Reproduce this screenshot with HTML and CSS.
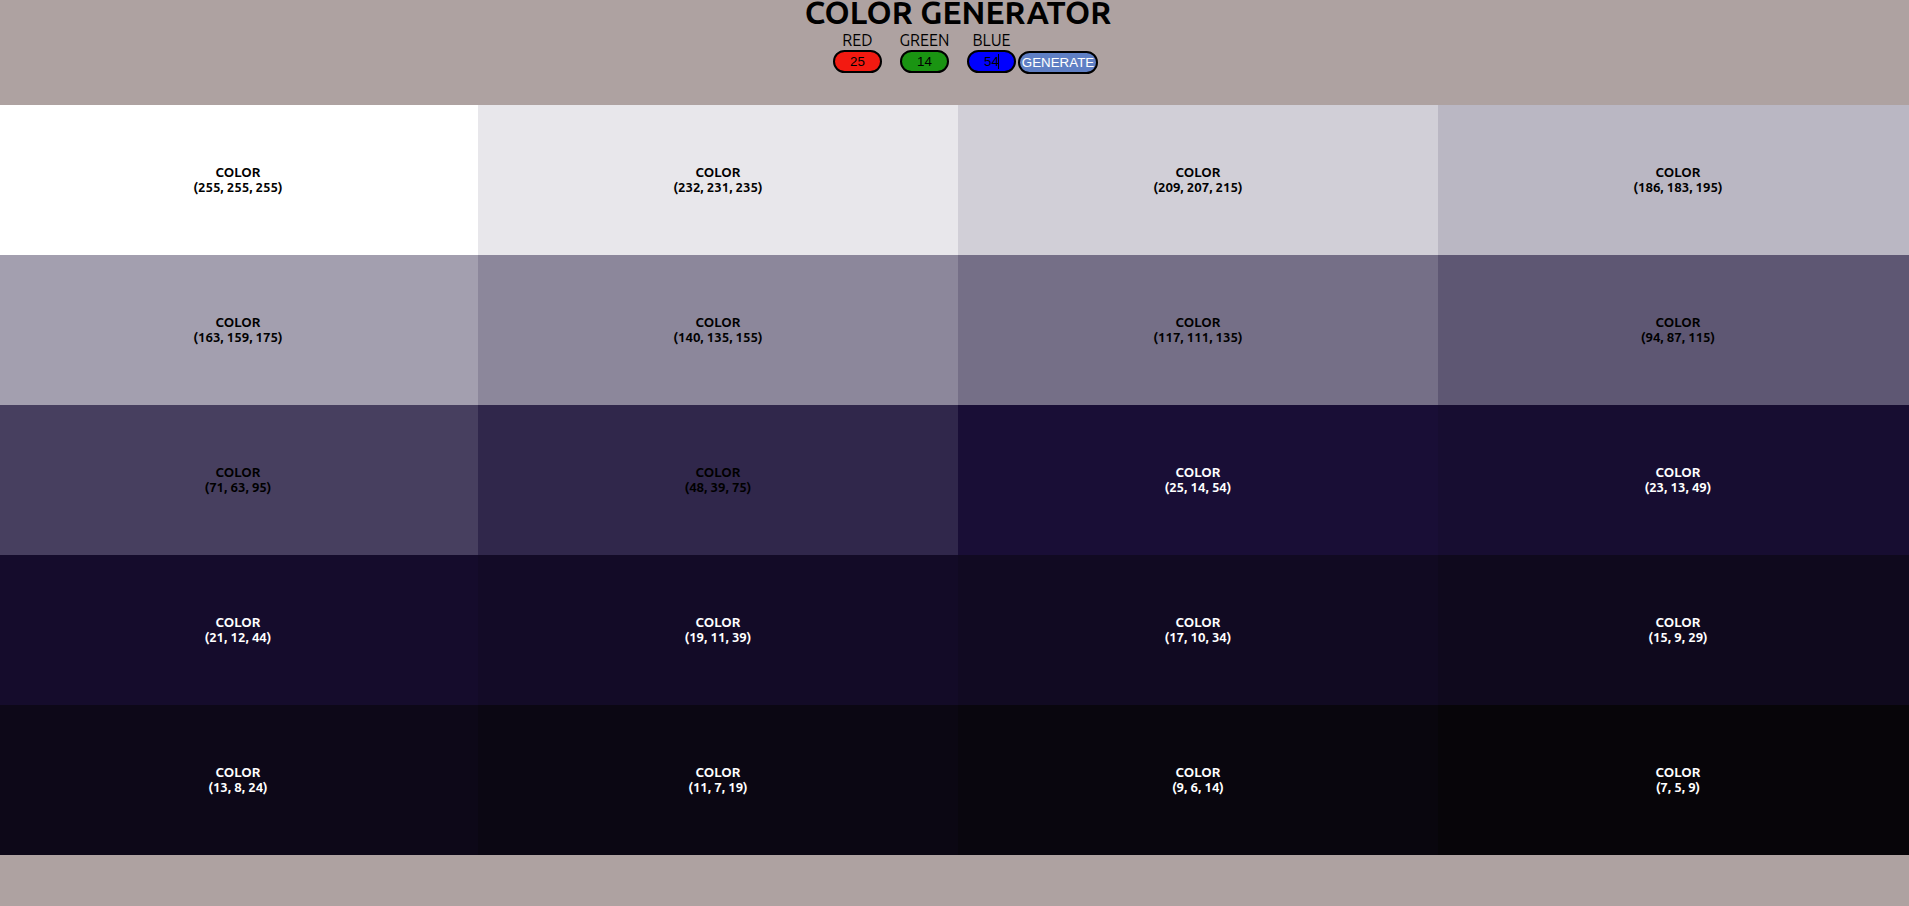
FILE: index.html
```html
<!DOCTYPE html>
<html lang="en">
<head>
<meta charset="utf-8">
<title>Color Generator</title>
<link rel="stylesheet" href="styles.css">
</head>
<body>
<main class="page">
  <header class="header">
    <h1 class="title">COLOR GENERATOR</h1>
    <form class="controls">
      <div class="field"><label for="red">RED</label><input class="channel red" id="red" type="text" inputmode="numeric" value="25"></div>
      <div class="field"><label for="green">GREEN</label><input class="channel green" id="green" type="text" inputmode="numeric" value="14"></div>
      <div class="field"><label for="blue">BLUE</label><input class="channel blue" id="blue" type="text" inputmode="numeric" value="54"><span class="caret"></span></div>
      <button class="generate" type="button">GENERATE</button>
    </form>
  </header>
  <section class="palette" id="palette"></section>
</main>
<script src="script.js"></script>
</body>
</html>
```
FILE: styles.css
```css
* {
  box-sizing: border-box;
  margin: 0;
  padding: 0;
}

body {
  background: #aea2a1;
  color: #000;
  font-family: Ubuntu, "Noto Sans", sans-serif;
  font-size: 16px;
  overflow: hidden;
}

.page {
  margin: 0 -9px 0 -2px;
}

.header {
  display: flex;
  flex-direction: column;
  align-items: center;
  padding-bottom: 31px;
}

.title {
  font-size: 32px;
  line-height: 24px;
  padding-bottom: 8px;
}

.controls {
  display: flex;
  align-items: flex-end;
  padding-left: 15px;
}

.field {
  position: relative;
  display: flex;
  flex-direction: column;
  align-items: center;
  gap: 2px;
  width: 49px;
  margin-right: 18px;
  padding-bottom: 1px;
  line-height: 16px;
}

.field:nth-child(3) {
  margin-right: 2px;
}

.channel {
  width: 49px;
  height: 23px;
  border: 2px solid #000;
  border-radius: 12px;
  color: #000;
  font-family: "Liberation Sans", Arial, sans-serif;
  text-align: center;
  outline: none;
}

.red {
  background: #f31a11;
}

.green {
  background: #1a9412;
}

.blue {
  background: #0000ff;
}

.caret {
  position: absolute;
  left: 31px;
  bottom: 5px;
  width: 1px;
  height: 15px;
  background: #000;
}

.generate {
  width: 80px;
  height: 23px;
  border: 2px solid #000;
  border-radius: 12px;
  background: #5f7fc4;
  color: #fff;
  font-family: "Liberation Sans", Arial, sans-serif;
  white-space: nowrap;
}

.palette {
  display: grid;
  grid-template-columns: repeat(4, 1fr);
  grid-auto-rows: 150px;
}

.swatch {
  display: flex;
  flex-direction: column;
  align-items: center;
  justify-content: center;
  padding-bottom: 1px;
  line-height: 15px;
}

.light-text {
  color: #fff;
}
```
FILE: script.js
```js
const colors = [
  [255, 255, 255], [232, 231, 235], [209, 207, 215], [186, 183, 195],
  [163, 159, 175], [140, 135, 155], [117, 111, 135], [94, 87, 115],
  [71, 63, 95], [48, 39, 75], [25, 14, 54], [23, 13, 49],
  [21, 12, 44], [19, 11, 39], [17, 10, 34], [15, 9, 29],
  [13, 8, 24], [11, 7, 19], [9, 6, 14], [7, 5, 9]
];
const palette = document.getElementById("palette");
colors.forEach((rgb, i) => {
  const value = `(${rgb.join(", ")})`;
  const swatch = document.createElement("div");
  swatch.className = i < 10 ? "swatch" : "swatch light-text";
  swatch.style.backgroundColor = "rgb" + value;
  for (const text of ["COLOR", value]) {
    const line = document.createElement("h5");
    line.textContent = text;
    swatch.append(line);
  }
  palette.append(swatch);
});
```
